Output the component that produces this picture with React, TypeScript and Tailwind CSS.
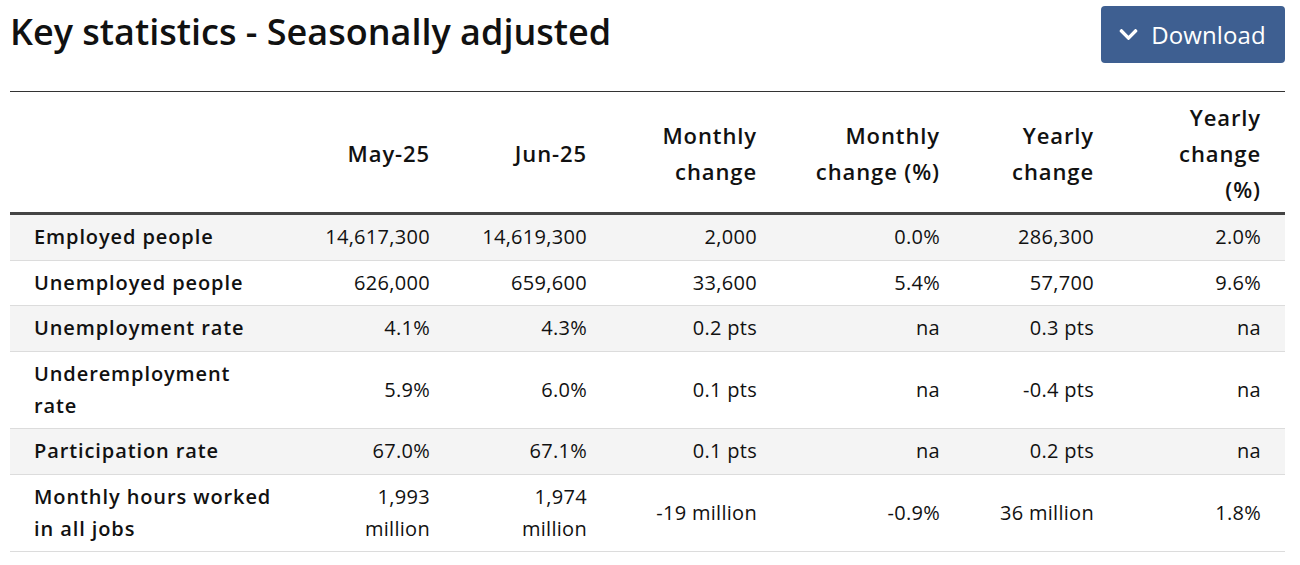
import { FC } from 'react';

interface StatRow {
  label: string;
  values: string[];
}

const columns = ['May-25', 'Jun-25', 'Monthly change', 'Monthly change (%)', 'Yearly change', 'Yearly change (%)'];

const rows: StatRow[] = [
  { label: 'Employed people', values: ['14,617,300', '14,619,300', '2,000', '0.0%', '286,300', '2.0%'] },
  { label: 'Unemployed people', values: ['626,000', '659,600', '33,600', '5.4%', '57,700', '9.6%'] },
  { label: 'Unemployment rate', values: ['4.1%', '4.3%', '0.2 pts', 'na', '0.3 pts', 'na'] },
  { label: 'Underemployment rate', values: ['5.9%', '6.0%', '0.1 pts', 'na', '-0.4 pts', 'na'] },
  { label: 'Participation rate', values: ['67.0%', '67.1%', '0.1 pts', 'na', '0.2 pts', 'na'] },
  {
    label: 'Monthly hours worked in all jobs',
    values: ['1,993 million', '1,974 million', '-19 million', '-0.9%', '36 million', '1.8%'],
  },
];

const colWidths = ['w-[287px]', 'w-[157px]', 'w-[157px]', 'w-[170px]', 'w-[183px]', 'w-[154px]', 'w-[167px]'];

const ChevronDown: FC = () => (
  <svg viewBox="0 0 448 512" className="h-[21px] w-[21px] fill-white" aria-hidden="true">
    <path d="M207.029 381.476L12.686 187.132c-9.373-9.373-9.373-24.569 0-33.941l22.667-22.667c9.357-9.357 24.522-9.375 33.901-.04L224 284.505l154.745-154.021c9.379-9.335 24.544-9.317 33.901.04l22.667 22.667c9.373 9.373 9.373 24.569 0 33.941L240.971 381.476c-9.373 9.372-24.569 9.372-33.942 0z" />
  </svg>
);

const App: FC = () => {
  return (
    <div className="min-h-[565px] bg-white px-[10px] pt-[6px] font-['Open_Sans',sans-serif] text-[#111]">
      {/* Title and download */}
      <div className="flex items-start justify-between pr-[5px]">
        <h1 className="pt-[2px] text-[36px] leading-[48px] font-semibold">Key statistics - Seasonally adjusted</h1>
        <button className="flex h-[57px] w-[184px] items-center justify-center gap-[12px] rounded-[4px] bg-[#3e5f91] pr-[2px] text-[24px] tracking-[0.1px] text-white">
          <ChevronDown />
          Download
        </button>
      </div>

      {/* Table */}
      <table className="mt-[28px] w-[1275px] table-fixed border-collapse border-t border-[#333] text-[20px]">
        <colgroup>
          {colWidths.map((w, i) => (
            <col key={i} className={w} />
          ))}
        </colgroup>
        <thead>
          <tr className="border-b-[3px] border-[#444]">
            <th className="px-[24px] pt-[7px] pb-[5px]" />
            {columns.map((c) => (
              <th
                key={c}
                className="px-[24px] pt-[7px] pb-[5px] text-right align-middle text-[22px] leading-[36px] font-semibold tracking-[0.9px]"
              >
                {c}
              </th>
            ))}
          </tr>
        </thead>
        <tbody>
          {rows.map((r, i) => (
            <tr key={r.label} className={`border-b border-[#dcdcdc] ${i % 2 === 0 ? 'bg-[#f4f4f4]' : 'bg-white'}`}>
              <th className="px-[24px] py-[6.25px] text-left leading-[32px] font-semibold tracking-[0.9px]">{r.label}</th>
              {r.values.map((v, j) => (
                <td key={j} className="px-[24px] py-[6.25px] text-right leading-[32px] tracking-[0.3px]">
                  {v}
                </td>
              ))}
            </tr>
          ))}
        </tbody>
      </table>
    </div>
  );
};

export default App;
